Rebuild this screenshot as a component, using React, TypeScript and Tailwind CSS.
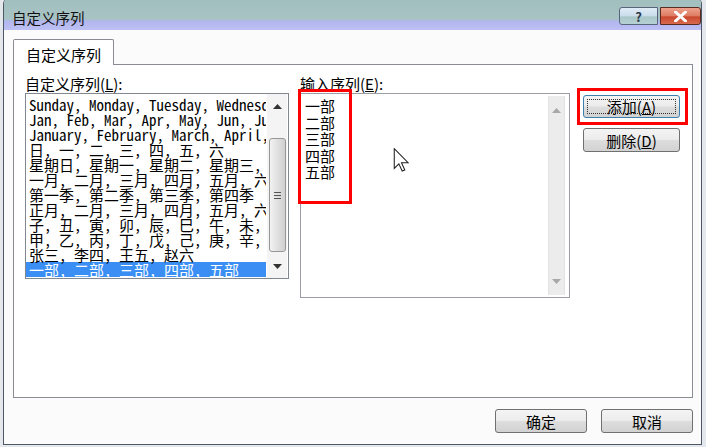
const listLines = [
  "Sunday, Monday, Tuesday, Wednesday, Thursday, Friday, Saturday",
  "Jan, Feb, Mar, Apr, May, Jun, Jul, Aug, Sep, Oct, Nov, Dec",
  "January, February, March, April, May, June, July",
  "日, 一, 二, 三, 四, 五, 六",
  "星期日, 星期一, 星期二, 星期三, 星期四, 星期五",
  "一月, 二月, 三月, 四月, 五月, 六月, 七月",
  "第一季, 第二季, 第三季, 第四季",
  "正月, 二月, 三月, 四月, 五月, 六月, 七月",
  "子, 丑, 寅, 卯, 辰, 巳, 午, 未, 申, 酉, 戌, 亥",
  "甲, 乙, 丙, 丁, 戊, 己, 庚, 辛, 壬, 癸",
  "张三, 李四, 王五, 赵六",
  "一部, 二部, 三部, 四部, 五部",
];

const entries = ["一部", "二部", "三部", "四部", "五部"];

const ui = "font-['Noto_Sans_CJK_SC','Noto_Sans',sans-serif]";
const mono = "font-['Noto_Sans_Mono_CJK_SC','Liberation_Mono','Noto_Sans_CJK_SC',monospace]";

function Btn({ children, focused, className }: { children: React.ReactNode; focused?: boolean; className?: string }) {
  return (
    <div
      className={
        "relative flex items-center justify-center rounded-[3px] border text-[15px] leading-none text-black bg-[linear-gradient(to_bottom,#f4f4f4_0%,#ececec_48%,#dddddd_52%,#d2d2d2_100%)] " +
        (focused ? "border-[#3c7fb1] " : "border-[#707070] ") +
        (className ?? "")
      }
    >
      {focused && <div className="absolute inset-[3px] border border-dotted border-[#333]" />}
      <span className="relative">{children}</span>
    </div>
  );
}

function Arrow({ up, color = "#333" }: { up?: boolean; color?: string }) {
  return (
    <svg width="9" height="5" viewBox="0 0 9 5">
      <path d={up ? "M0 5 L4.5 0 L9 5 Z" : "M0 0 L4.5 5 L9 0 Z"} fill={color} />
    </svg>
  );
}

export default function App() {
  return (
    <div className={"relative w-[706px] h-[447px] overflow-hidden bg-[#e4e7eb] " + ui}>
      <div className="ml-[3px] mt-[-2px] flex h-[447px] w-[699px] flex-col rounded-t-[6px] border-x border-b border-[#4d5864] bg-[#fbfbfb]">
        {/* title bar */}
        <div className="flex h-[32px] items-start rounded-t-[5px] bg-[linear-gradient(to_bottom,#a1bfbe_0%,#a8c3c4_66%,#b2b6ee_72%,#bcc0f4_100%)]">
          <div className="pl-[8px] pt-[12px] text-[14.5px] leading-[16px] text-[#111]">自定义序列</div>
          <div className="ml-auto mt-[9px] flex gap-[2px]">
            <div className="flex h-[18px] w-[39px] items-center justify-center rounded-l-[3px] border border-[#58657a] bg-[linear-gradient(to_bottom,#e0ecf6_0%,#cadcea_50%,#a9c6c8_55%,#b7d0d4_100%)] text-[13px] font-bold leading-none text-[#2d3a4a]">
              ?
            </div>
            <div className="flex h-[18px] w-[41px] items-center justify-center rounded-r-[3px] border border-[#5a2b22] bg-[linear-gradient(to_bottom,#eea28e_0%,#de7c62_50%,#c9472e_55%,#d86a4f_100%)]">
              <svg width="13" height="11" viewBox="0 0 13 11">
                <path d="M1.5 1 L11.5 10 M11.5 1 L1.5 10" stroke="#fff" strokeWidth="3" strokeLinecap="round" />
              </svg>
            </div>
          </div>
        </div>

        {/* body */}
        <div className="flex flex-1 flex-col pl-[9px] pt-[9px]">
          <div className="flex">
            <div className="relative z-10 -mb-px flex h-[26px] w-[101px] items-start justify-center rounded-t-[2px] border-x border-t border-[#898c95] bg-white pt-[7px] text-[15px] leading-[16px] text-black">
              自定义序列
            </div>
          </div>
          <div className="flex h-[334px] w-[680px] gap-[11px] border border-[#898c95] bg-white pl-[11px] pt-[11px]">
            {/* left column */}
            <div className="flex w-[264px] flex-col">
              <div className="h-[17px] text-[15px] leading-[16px] text-black">
                自定义序列(<span className="underline">L</span>):
              </div>
              <div className="flex h-[186px] border border-[#828790] bg-white">
                <div className={"w-[240px] overflow-hidden pt-[3px] text-[15px] leading-[15px] " + mono}>
                  {listLines.map((l, i) => (
                    <div
                      key={i}
                      className={
                        "h-[15px] whitespace-pre pl-[3px] " +
                        (i === listLines.length - 1 ? "bg-[#3b8ff4] text-white" : "text-black")
                      }
                    >
                      {l}
                    </div>
                  ))}
                </div>
                <div className="ml-[1px] flex w-[20px] flex-col items-center bg-[#f4f4f4]">
                  <div className="flex h-[22px] items-center justify-center pt-[2px]">
                    <Arrow up />
                  </div>
                  <div className="mt-[22px] flex h-[114px] w-[17px] items-center justify-center rounded-[3px] border border-[#979797] bg-[linear-gradient(to_right,#f2f2f2,#e0e0e0_50%,#d0d0d0)]">
                    <div className="flex flex-col gap-[2px]">
                      <div className="h-px w-[7px] bg-[#555]" />
                      <div className="h-px w-[7px] bg-[#555]" />
                      <div className="h-px w-[7px] bg-[#555]" />
                    </div>
                  </div>
                  <div className="mt-auto flex h-[22px] items-center justify-center pb-[2px]">
                    <Arrow />
                  </div>
                </div>
              </div>
            </div>

            {/* right column */}
            <div className="flex w-[270px] flex-col">
              <div className="h-[17px] text-[15px] leading-[16px] text-black">
                输入序列(<span className="underline">E</span>):
              </div>
              <div className="flex h-[205px] border border-[#9a9ca6] bg-white">
                <div className="flex-1 pl-[4px] pt-[4px] text-[15px] leading-[16.5px] text-black">
                  {entries.map((e) => (
                    <div key={e}>{e}</div>
                  ))}
                </div>
                <div className="my-[2px] mr-[4px] flex w-[17px] flex-col items-center border-x border-[#e2e2e2] bg-[#ececec]">
                  <div className="flex h-[22px] items-center justify-center pt-[6px]">
                    <Arrow up color="#a8a8a8" />
                  </div>
                  <div className="mt-auto flex h-[22px] items-center justify-center pb-[6px]">
                    <Arrow color="#a8a8a8" />
                  </div>
                </div>
              </div>
            </div>

            {/* buttons */}
            <div className="ml-[2px] flex w-[97px] flex-col pt-[19px]">
              <Btn focused className="h-[23px]">
                添加(<span className="underline">A</span>)
              </Btn>
              <Btn className="mt-[10px] h-[24px]">
                删除(<span className="underline">D</span>)
              </Btn>
            </div>
          </div>

          <div className="mt-[11px] flex w-[680px] justify-end gap-[14px]">
            <Btn className="h-[24px] w-[92px]">确定</Btn>
            <Btn className="h-[24px] w-[92px]">取消</Btn>
          </div>
        </div>
      </div>

      {/* annotations */}
      <div className="absolute left-[298px] top-[89px] h-[115px] w-[54px] border-[3px] border-[#ff0000]" />
      <div className="absolute left-[577px] top-[88px] h-[37px] w-[111px] border-[3px] border-[#ff0000]" />

      {/* mouse cursor */}
      <svg className="absolute left-[392px] top-[148px]" width="19" height="25" viewBox="0 0 12 19">
        <path
          d="M0.5 0.5 L0.5 15.5 L4 12 L6.5 17.5 L8.5 16.7 L6 11.2 L11 11.2 Z"
          fill="#fff"
          stroke="#222"
          strokeWidth="0.8"
          strokeLinejoin="miter"
        />
      </svg>
    </div>
  );
}
